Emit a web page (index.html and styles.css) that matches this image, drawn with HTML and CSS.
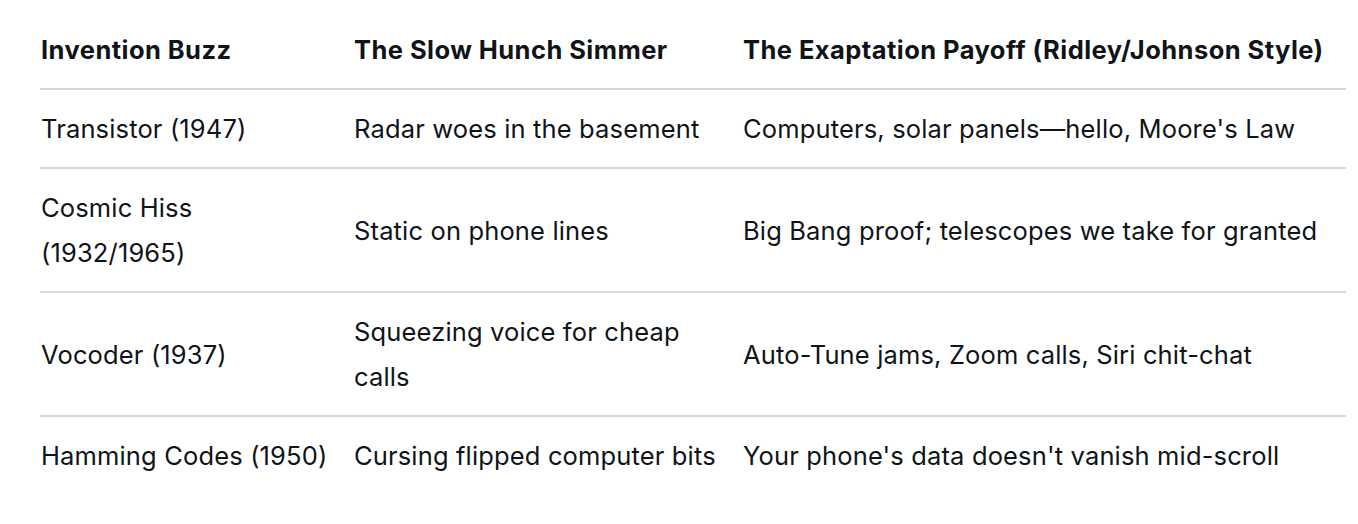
FILE: index.html
```html
<!DOCTYPE html>
<html lang="en">
<head>
<meta charset="utf-8">
<title>Invention table</title>
<link rel="stylesheet" href="styles.css">
</head>
<body>
<table class="grid">
  <colgroup>
    <col class="c1"><col class="c2"><col class="c3">
  </colgroup>
  <thead>
    <tr>
      <th>Invention Buzz</th>
      <th>The Slow Hunch Simmer</th>
      <th>The Exaptation Payoff (Ridley/Johnson Style)</th>
    </tr>
  </thead>
  <tbody>
    <tr>
      <td>Transistor (1947)</td>
      <td>Radar woes in the basement</td>
      <td>Computers, solar panels—hello, Moore's Law</td>
    </tr>
    <tr>
      <td>Cosmic Hiss<br>(1932/1965)</td>
      <td>Static on phone lines</td>
      <td>Big Bang proof; telescopes we take for granted</td>
    </tr>
    <tr>
      <td>Vocoder (1937)</td>
      <td>Squeezing voice for cheap<br>calls</td>
      <td>Auto-Tune jams, Zoom calls, Siri chit-chat</td>
    </tr>
    <tr>
      <td>Hamming Codes (1950)</td>
      <td>Cursing flipped computer bits</td>
      <td>Your phone's data doesn't vanish mid-scroll</td>
    </tr>
  </tbody>
</table>
</body>
</html>
```
FILE: styles.css
```css
html, body {
  margin: 0;
  padding: 0;
  background: #ffffff;
}

body {
  font-family: "Inter", "Noto Sans", "Liberation Sans", sans-serif;
  font-size: 25.5px;
  line-height: 45px;
  color: #0f1419;
}

.grid {
  border-collapse: collapse;
  table-layout: fixed;
  width: 1306px;
  margin: 11px 0 0 40px;
}

.c1 { width: 313px; }
.c2 { width: 389px; }
.c3 { width: 604px; }

.grid th,
.grid td {
  padding: 16px 0 16px 1px;
  text-align: left;
  vertical-align: middle;
  white-space: nowrap;
}

.grid td {
  letter-spacing: 0.15px;
}

.grid th {
  font-weight: 700;
  letter-spacing: 0.45px;
}

.grid thead tr,
.grid tbody tr {
  border-bottom: 2px solid #cfd9de;
}

.grid tbody tr:last-child {
  border-bottom: none;
}
```
